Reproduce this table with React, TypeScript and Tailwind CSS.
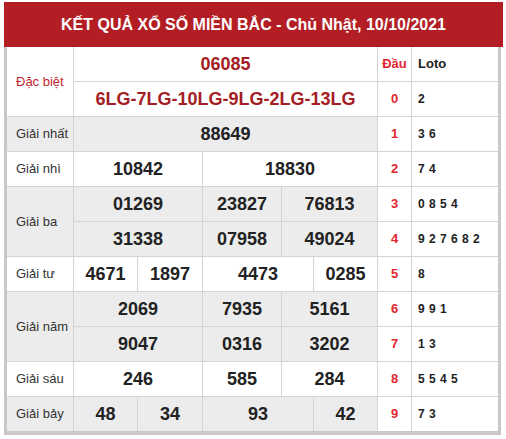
type Num = [string, string]

type Line = {
  label?: string
  rows?: 2
  gray: boolean
  red?: boolean
  nums: Num[]
}

const lines: Line[] = [
  { label: 'Đặc biệt', rows: 2, gray: false, red: true, nums: [['06085', 'col-span-5']] },
  { gray: false, red: true, nums: [['6LG-7LG-10LG-9LG-2LG-13LG', 'col-span-5']] },
  { label: 'Giải nhất', gray: true, nums: [['88649', 'col-span-5']] },
  { label: 'Giải nhì', gray: false, nums: [['10842', 'col-span-2'], ['18830', 'col-span-3']] },
  { label: 'Giải ba', rows: 2, gray: true, nums: [['01269', 'col-span-2'], ['23827', ''], ['76813', 'col-span-2']] },
  { gray: true, nums: [['31338', 'col-span-2'], ['07958', ''], ['49024', 'col-span-2']] },
  { label: 'Giải tư', gray: false, nums: [['4671', ''], ['1897', ''], ['4473', 'col-span-2'], ['0285', '']] },
  { label: 'Giải năm', rows: 2, gray: true, nums: [['2069', 'col-span-2'], ['7935', ''], ['5161', 'col-span-2']] },
  { gray: true, nums: [['9047', 'col-span-2'], ['0316', ''], ['3202', 'col-span-2']] },
  { label: 'Giải sáu', gray: false, nums: [['246', 'col-span-2'], ['585', ''], ['284', 'col-span-2']] },
  { label: 'Giải bảy', gray: true, nums: [['48', ''], ['34', ''], ['93', 'col-span-2'], ['42', '']] },
]

const loto: [string, string][] = [
  ['Đầu', 'Loto'],
  ['0', '2'],
  ['1', '3 6'],
  ['2', '7 4'],
  ['3', '0 8 5 4'],
  ['4', '9 2 7 6 8 2'],
  ['5', '8'],
  ['6', '9 9 1'],
  ['7', '1 3'],
  ['8', '5 5 4 5'],
  ['9', '7 3'],
]

export default function App() {
  return (
    <div className="ml-[4px] mt-[2px] w-[499px] font-['Liberation_Sans',Arial,sans-serif]">
      <div className="flex h-[45px] items-center justify-center bg-[#b21e23] text-[16px] font-bold text-white">
        KẾT QUẢ XỔ SỐ MIỀN BẮC - Chủ Nhật, 10/10/2021
      </div>
      <div className="grid w-[497px] grid-cols-[66px_63px_64px_78px_31px_63px_33px_86px] auto-rows-[34px] gap-px border-x-[3px] border-b-4 border-[#c8c8c8] bg-[#d4d4d4]">
        {lines.map((line, i) => (
          <Row key={i} line={line} dau={loto[i][0]} values={loto[i][1]} head={i === 0} />
        ))}
      </div>
    </div>
  )
}

function Row({ line, dau, values, head }: { line: Line; dau: string; values: string; head: boolean }) {
  const bg = line.gray ? 'bg-[#ececec]' : 'bg-white'
  return (
    <>
      {line.label && (
        <div
          className={`flex items-center pl-[9px] text-[13px] ${bg} ${line.rows === 2 ? 'row-span-2' : ''} ${
            line.red ? 'text-[#c0262c]' : 'text-[#333]'
          }`}
        >
          {line.label}
        </div>
      )}
      {line.nums.map(([n, span], j) => (
        <div
          key={j}
          className={`flex items-center justify-center text-[18px] font-bold ${bg} ${span} ${
            line.red ? 'text-[#a51d24]' : 'text-[#222]'
          }`}
        >
          {n}
        </div>
      ))}
      <div className="flex items-center justify-center bg-white text-[13px] font-bold text-[#e3262e]">{dau}</div>
      <div
        className={`flex items-center bg-white pl-[6px] font-bold text-[#222] ${
          head ? 'text-[13px]' : 'text-[12px] tracking-[0.5px]'
        }`}
      >
        {values}
      </div>
    </>
  )
}
